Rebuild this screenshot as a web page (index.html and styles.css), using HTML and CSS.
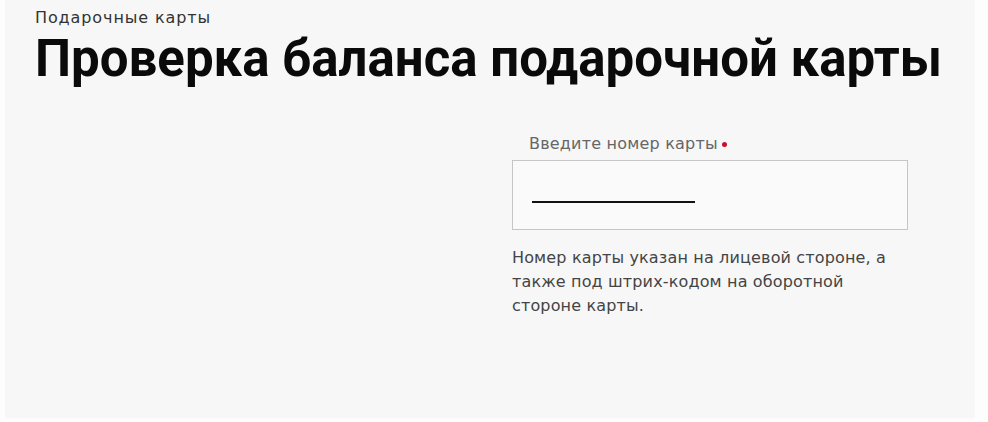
FILE: index.html
```html
<!DOCTYPE html>
<html lang="ru">
<head>
  <meta charset="UTF-8" />
  <title>Проверка баланса подарочной карты</title>
  <link rel="stylesheet" href="styles.css">
</head>
<body>

  <div class="page">
    <div class="breadcrumb">Подарочные карты</div>
    <h1 class="title">Проверка баланса подарочной карты</h1>

    <div class="content">
      <div class="aside"></div>
      <form class="balance-form">
        <label class="field-label" for="card">Введите номер карты <span class="required"></span></label>
        <div class="field">
          <span class="field-mask"></span>
        </div>
        <p class="hint">Номер карты указан на лицевой стороне, а также под штрих-кодом на оборотной стороне карты.</p>
      </form>
    </div>
  </div>

</body>
</html>
```

FILE: styles.css
```css
body {
  margin: 0;
  background: #fdfdfd;
  font-family: "DejaVu Sans", Arial, sans-serif;
  color: #333;
}

.page {
  background: #f7f7f7;
  margin: 0 13px 4px 5px;
  height: 418px;
  padding: 0 0 0 30px;
  box-sizing: border-box;
  overflow: hidden;
}

.breadcrumb {
  font-size: 16px;
  line-height: 20px;
  padding-top: 8px;
  letter-spacing: 0.9px;
  color: #333;
}

.title {
  font-family: Roboto, "Liberation Sans", sans-serif;
  font-weight: 700;
  font-size: 51px;
  line-height: 60px;
  margin: 1px 0 0;
  color: #0a0a0a;
}

.content {
  display: grid;
  grid-template-columns: 477px 396px;
  margin-top: 45px;
}

.field-label {
  display: block;
  font-size: 16px;
  line-height: 20px;
  letter-spacing: 0.2px;
  color: #666;
  padding-left: 17px;
}

.required {
  display: inline-block;
  width: 5px;
  height: 5px;
  border-radius: 50%;
  background: #c8102e;
  vertical-align: middle;
  margin-left: -1px;
}

.field {
  margin-top: 6px;
  height: 70px;
  border: 1.5px solid #c6c6c6;
  background: #fafafa;
  box-sizing: border-box;
  display: flex;
  align-items: flex-end;
  padding: 0 0 26px 19px;
}

.field-mask {
  width: 163px;
  height: 2px;
  background: #111;
}

.hint {
  margin: 16px 0 0;
  font-size: 16px;
  line-height: 24px;
  letter-spacing: 0.15px;
  color: #444;
  width: 396px;
}
```
